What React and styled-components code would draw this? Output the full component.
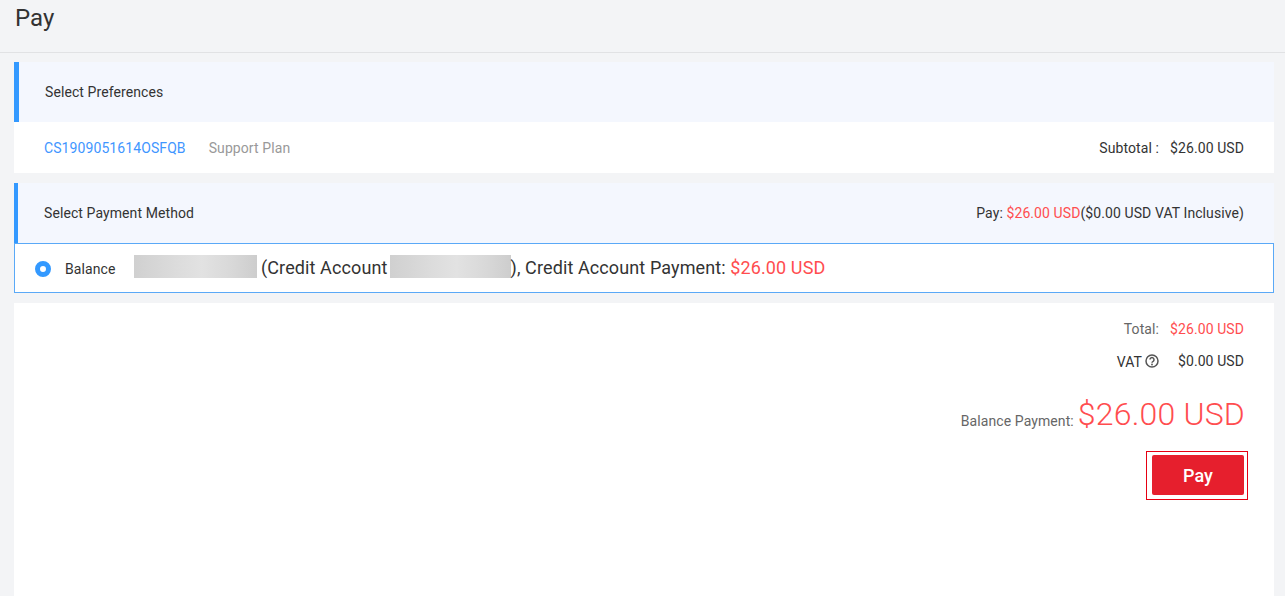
import React from "react";
import styled, { createGlobalStyle } from "styled-components";

const Global = createGlobalStyle`
  html, body { margin: 0; padding: 0; height: 100%; }
  body {
    background: #f3f4f6;
    font-family: Roboto, "Liberation Sans", sans-serif;
    font-size: 14px;
    letter-spacing: 0.09px;
    color: #333;
    overflow: hidden;
  }
`;

const TitleBar = styled.header`
  height: 52px;
  padding-left: 15px;
  border-bottom: 1px solid #e1e2e4;
  box-sizing: content-box;
`;

const Title = styled.h1`
  margin: 0;
  font-size: 24px;
  font-weight: 400;
  line-height: 37px;
  letter-spacing: 0;
  color: #333;
`;

const Content = styled.main`
  display: flex;
  flex-direction: column;
  margin: 9px 11px 0 14px;
`;

const SectionHead = styled.div`
  height: 60px;
  display: flex;
  align-items: center;
  justify-content: space-between;
  box-sizing: border-box;
  background: #f4f7fe;
  border-left: ${p => p.$bar}px solid #3399ff;
  padding-left: ${p => p.$indent}px;
  padding-right: 30px;
`;

const Row = styled.div`
  height: 51px;
  display: flex;
  align-items: center;
  justify-content: space-between;
  background: #fff;
  padding: 0 30px;
  margin-bottom: 10px;
`;

const RowLeft = styled.div`
  display: flex;
  align-items: center;
  gap: 23px;
`;

const OrderLink = styled.a`
  color: #3f96ff;
`;

const Muted = styled.span`
  color: #999;
`;

const Red = styled.span`
  color: #ff4d4f;
`;

const Subtotal = styled.div`
  display: flex;
  gap: 11px;
`;

const Option = styled.div`
  height: 50px;
  box-sizing: border-box;
  display: flex;
  align-items: center;
  background: #fff;
  border: 1px solid #5aa9f7;
  padding-left: 20px;
  margin-bottom: 10px;
`;

const Radio = styled.span`
  width: 16px;
  height: 16px;
  box-sizing: border-box;
  border-radius: 50%;
  border: 5px solid #3399ff;
  background: #fff;
  margin-right: 14px;
  margin-top: 2px;
`;

const OptionLabel = styled.span`
  width: 69px;
  flex-shrink: 0;
  margin-top: 2px;
`;

const Blur = styled.span`
  display: inline-block;
  flex-shrink: 0;
  width: ${p => p.$w}px;
  height: 23px;
  margin-top: ${p => p.$top}px;
  background: linear-gradient(90deg, #d0d0d0 0%, #dcdcdc 35%, #e2e2e2 55%, #d8d8d8 80%, #cdcdcd 100%);
`;

const OptionText = styled.span`
  font-size: 18px;
  letter-spacing: 0.11px;
  color: #333;
  margin-top: -2px;
  padding: 0 ${p => p.$r || 0}px 0 ${p => p.$l || 0}px;
  white-space: pre;
`;

const Summary = styled.section`
  height: 293px;
  background: #fff;
  padding: 16px 30px 0;
  display: flex;
  flex-direction: column;
  align-items: flex-end;
`;

const SummaryLine = styled.div`
  display: flex;
  align-items: center;
  height: 20px;
  margin-bottom: 12px;
`;

const LineLabel = styled.span`
  color: ${p => p.$c};
  margin-right: ${p => p.$gap}px;
  margin-top: ${p => p.$drop || 0}px;
  display: flex;
  align-items: center;
  gap: 3px;
`;

const HelpIcon = styled.svg`
  width: 14px;
  height: 14px;
  margin-top: -1px;
`;

const PayLine = styled.div`
  display: flex;
  align-items: flex-end;
  margin-top: 9px;
  margin-right: -1px;
`;

const PayLabel = styled.span`
  color: #666;
  margin-right: 4px;
  margin-bottom: 7px;
`;

const BigAmount = styled.span`
  font-size: 32px;
  font-weight: 300;
  letter-spacing: 0.2px;
  line-height: 44px;
  color: #ff4d4f;
`;

const PayFrame = styled.div`
  margin-top: 15px;
  margin-right: -4px;
  border: 1px solid #e60012;
  padding: 3px 3px 4px 5px;
  display: flex;
`;

const PayButton = styled.button`
  width: 92px;
  height: 40px;
  border: 0;
  border-radius: 2px;
  background: #e61f2d;
  color: #fff;
  font-family: inherit;
  font-size: 18px;
  font-weight: 500;
  padding: 0;
`;

export default function App() {
  return (
    <>
      <Global />
      <TitleBar>
        <Title>Pay</Title>
      </TitleBar>
      <Content>
        <SectionHead $bar={5} $indent={26}>Select Preferences</SectionHead>
        <Row>
          <RowLeft>
            <OrderLink>CS1909051614OSFQB</OrderLink>
            <Muted>Support Plan</Muted>
          </RowLeft>
          <Subtotal>
            <span>Subtotal :</span>
            <span>$26.00 USD</span>
          </Subtotal>
        </Row>
        <SectionHead $bar={4} $indent={26}>
          <span>Select Payment Method</span>
          <span>Pay: <Red>$26.00 USD</Red>($0.00 USD VAT Inclusive)</span>
        </SectionHead>
        <Option>
          <Radio />
          <OptionLabel>Balance</OptionLabel>
          <Blur $w={123} $top={-3} />
          <OptionText $l={4} $r={2}>(Credit Account</OptionText>
          <Blur $w={121} $top={-4} />
          <OptionText>), Credit Account Payment: <Red>$26.00 USD</Red></OptionText>
        </Option>
        <Summary>
          <SummaryLine>
            <LineLabel $c="#666" $gap={11}>Total:</LineLabel>
            <Red>$26.00 USD</Red>
          </SummaryLine>
          <SummaryLine>
            <LineLabel $c="#333" $gap={19} $drop={1}>
              VAT
              <HelpIcon viewBox="0 0 14 14" fill="none">
                <circle cx="7" cy="7" r="6" stroke="#555" strokeWidth="1.5" />
                <path d="M5 5.6a2 2 0 1 1 3.1 1.7c-.8.4-1.1.7-1.1 1.5" stroke="#555" strokeWidth="1.5" />
                <circle cx="7" cy="10.5" r=".9" fill="#555" />
              </HelpIcon>
            </LineLabel>
            <span>$0.00 USD</span>
          </SummaryLine>
          <PayLine>
            <PayLabel>Balance Payment:</PayLabel>
            <BigAmount>$26.00 USD</BigAmount>
          </PayLine>
          <PayFrame>
            <PayButton>Pay</PayButton>
          </PayFrame>
        </Summary>
      </Content>
    </>
  );
}
